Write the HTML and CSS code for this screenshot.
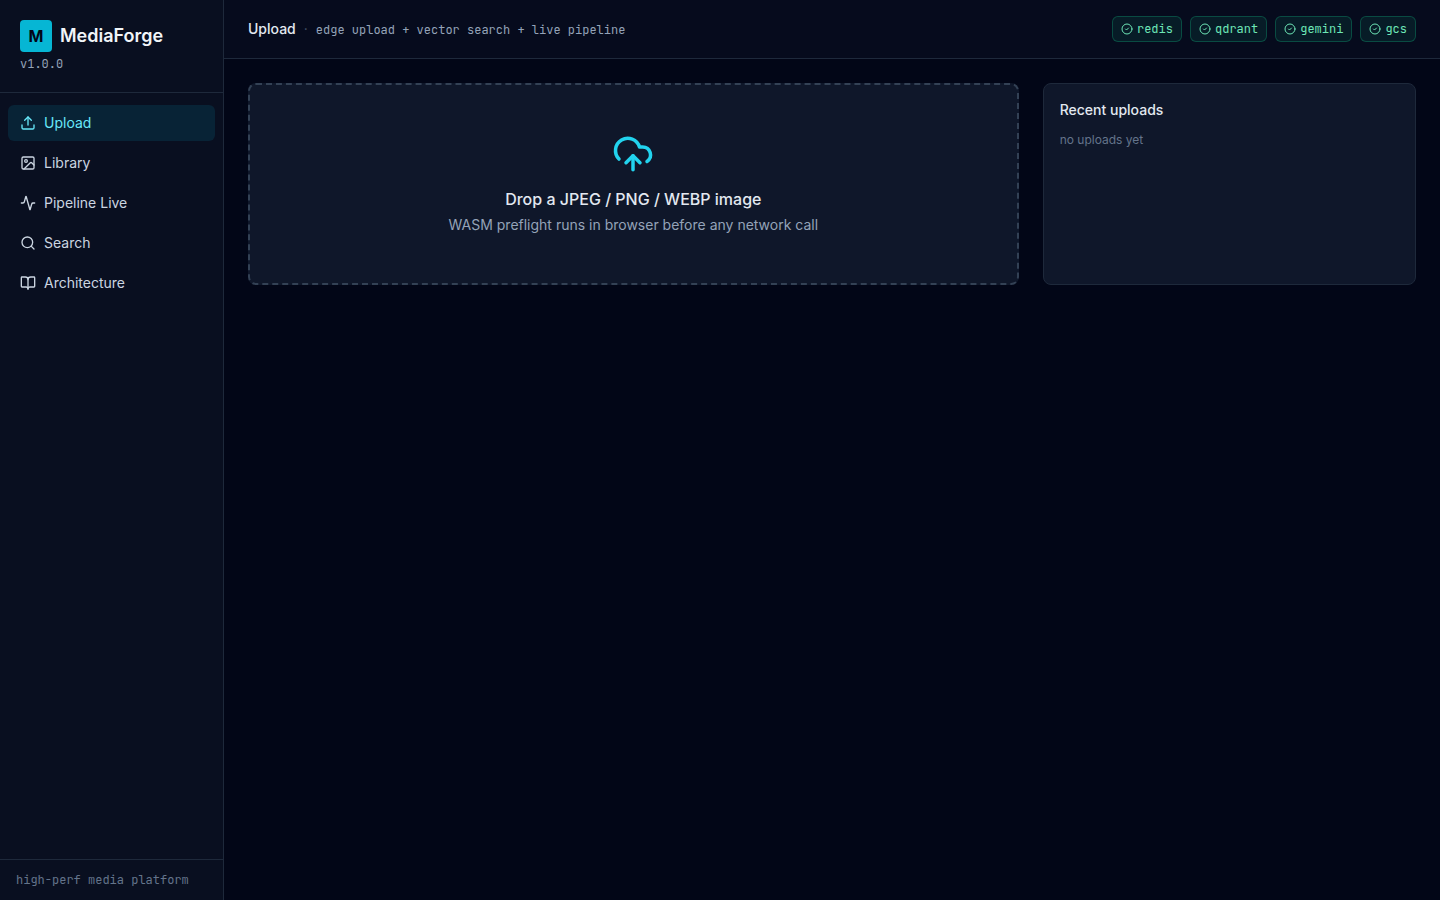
FILE: index.html
```
<!DOCTYPE html>
<html lang="en">
<head>
    <meta charset="UTF-8">
    <meta name="viewport" content="width=device-width, initial-scale=1.0">
    <title>MediaForge</title>
    <link rel="stylesheet" href="styles.css">
</head>
<body>
    <div class="app">
        <aside class="sidebar">
            <div class="brand">
                <div class="brand-row">
                    <span class="logo">M</span>
                    <span class="brand-name">MediaForge</span>
                </div>
                <div class="version">v1.0.0</div>
            </div>

            <nav class="nav">
                <a href="#upload" class="nav-link active" aria-current="page">
                    <svg class="icon" viewBox="0 0 24 24"><path d="M12 3v12"/><path d="m17 8-5-5-5 5"/><path d="M21 15v4a2 2 0 0 1-2 2H5a2 2 0 0 1-2-2v-4"/></svg>
                    Upload
                </a>
                <a href="#library" class="nav-link">
                    <svg class="icon" viewBox="0 0 24 24"><rect width="18" height="18" x="3" y="3" rx="2"/><circle cx="9" cy="9" r="2"/><path d="m21 15-3.086-3.086a2 2 0 0 0-2.828 0L6 21"/></svg>
                    Library
                </a>
                <a href="#pipeline" class="nav-link">
                    <svg class="icon" viewBox="0 0 24 24"><path d="M22 12h-2.48a2 2 0 0 0-1.93 1.46l-2.35 8.36a.25.25 0 0 1-.48 0L9.24 2.18a.25.25 0 0 0-.48 0l-2.35 8.36A2 2 0 0 1 4.49 12H2"/></svg>
                    Pipeline Live
                </a>
                <a href="#search" class="nav-link">
                    <svg class="icon" viewBox="0 0 24 24"><circle cx="11" cy="11" r="8"/><path d="m21 21-4.3-4.3"/></svg>
                    Search
                </a>
                <a href="#architecture" class="nav-link">
                    <svg class="icon" viewBox="0 0 24 24"><path d="M12 7v14"/><path d="M3 18a1 1 0 0 1-1-1V4a1 1 0 0 1 1-1h5a4 4 0 0 1 4 4 4 4 0 0 1 4-4h5a1 1 0 0 1 1 1v13a1 1 0 0 1-1 1h-6a3 3 0 0 0-3 3 3 3 0 0 0-3-3z"/></svg>
                    Architecture
                </a>
            </nav>

            <div class="sidebar-footer">high-perf media platform</div>
        </aside>

        <div class="content">
            <header class="topbar">
                <div class="crumbs">
                    <h1 class="page-title">Upload</h1>
                    <span class="dot">·</span>
                    <span class="tagline">edge upload + vector search + live pipeline</span>
                </div>
                <div class="services">
                    <span class="service"><svg class="icon" viewBox="0 0 24 24"><circle cx="12" cy="12" r="10"/><path d="m9 12 2 2 4-4"/></svg>redis</span>
                    <span class="service"><svg class="icon" viewBox="0 0 24 24"><circle cx="12" cy="12" r="10"/><path d="m9 12 2 2 4-4"/></svg>qdrant</span>
                    <span class="service"><svg class="icon" viewBox="0 0 24 24"><circle cx="12" cy="12" r="10"/><path d="m9 12 2 2 4-4"/></svg>gemini</span>
                    <span class="service"><svg class="icon" viewBox="0 0 24 24"><circle cx="12" cy="12" r="10"/><path d="m9 12 2 2 4-4"/></svg>gcs</span>
                </div>
            </header>

            <main class="main">
                <label class="dropzone" for="file">
                    <input class="file-input" id="file" type="file" accept="image/jpeg,image/png,image/webp">
                    <svg class="icon drop-icon" viewBox="0 0 24 24"><path d="M12 13v8"/><path d="M4 14.899A7 7 0 1 1 15.71 8h1.79a4.5 4.5 0 0 1 2.5 8.242"/><path d="m8 17 4-4 4 4"/></svg>
                    <span class="drop-title">Drop a JPEG / PNG / WEBP image</span>
                    <span class="drop-hint">WASM preflight runs in browser before any network call</span>
                </label>

                <section class="recent">
                    <h2 class="recent-title">Recent uploads</h2>
                    <p class="recent-empty">no uploads yet</p>
                </section>
            </main>
        </div>
    </div>
</body>
</html>
```
FILE: styles.css
```
* {
    margin: 0;
    padding: 0;
    box-sizing: border-box;
}

body {
    font-family: Inter, sans-serif;
    font-size: 14px;
    line-height: 20px;
    background: #020617;
    color: #e2e8f0;
    -webkit-font-smoothing: antialiased;
}

.app {
    display: flex;
    min-height: 100vh;
}

.icon {
    width: 16px;
    height: 16px;
    flex-shrink: 0;
    fill: none;
    stroke: currentColor;
    stroke-width: 2;
    stroke-linecap: round;
    stroke-linejoin: round;
}

/* Sidebar */
.sidebar {
    width: 224px;
    flex-shrink: 0;
    display: flex;
    flex-direction: column;
    background: rgba(15, 23, 42, 0.5);
    border-right: 1px solid #1e293b;
}

.brand {
    padding: 20px;
    border-bottom: 1px solid #1e293b;
}

.brand-row {
    display: flex;
    align-items: center;
    gap: 8px;
}

.logo {
    display: flex;
    align-items: center;
    justify-content: center;
    width: 32px;
    height: 32px;
    border-radius: 4px;
    background: #06b6d4;
    color: #020617;
    font-size: 16px;
    font-weight: 700;
}

.brand-name {
    font-size: 18px;
    line-height: 28px;
    font-weight: 600;
    color: #f1f5f9;
}

.version,
.sidebar-footer,
.tagline,
.service {
    font-family: "JetBrains Mono", "Liberation Mono", monospace;
    font-size: 12px;
    line-height: 16px;
}

.version {
    margin-top: 4px;
    color: #94a3b8;
}

.nav {
    flex: 1;
    display: flex;
    flex-direction: column;
    gap: 4px;
    padding: 12px 8px;
}

.nav-link {
    display: flex;
    align-items: center;
    gap: 8px;
    padding: 8px 12px;
    border-radius: 6px;
    color: #cbd5e1;
    text-decoration: none;
}

.nav-link:hover {
    background: #1e293b;
}

.nav-link.active {
    background: rgba(6, 182, 212, 0.12);
    color: #67e8f9;
}

.sidebar-footer {
    padding: 12px 16px;
    border-top: 1px solid #1e293b;
    color: #64748b;
}

/* Top bar */
.content {
    flex: 1;
    min-width: 0;
}

.topbar {
    display: flex;
    align-items: center;
    justify-content: space-between;
    padding: 16px 24px;
    background: rgba(15, 23, 42, 0.3);
    border-bottom: 1px solid #1e293b;
}

.crumbs {
    display: flex;
    align-items: baseline;
    gap: 8px;
}

.services {
    display: flex;
    align-items: center;
    gap: 8px;
}

.page-title,
.recent-title {
    font-size: 14px;
    font-weight: 500;
}

.dot {
    color: #475569;
}

.tagline {
    color: #94a3b8;
}

.service {
    display: flex;
    align-items: center;
    gap: 4px;
    padding: 4px 8px;
    border: 1px solid rgba(16, 185, 129, 0.3);
    border-radius: 6px;
    background: rgba(16, 185, 129, 0.1);
    color: #6ee7b7;
}

.service .icon {
    width: 12px;
    height: 12px;
}

/* Upload page */
.main {
    display: grid;
    grid-template-columns: repeat(3, 1fr);
    gap: 24px;
    padding: 24px;
}

.dropzone {
    grid-column: span 2;
    display: flex;
    flex-direction: column;
    align-items: center;
    padding: 48px;
    border: 2px dashed #334155;
    border-radius: 8px;
    background: #0f172a;
    cursor: pointer;
}

.file-input {
    position: absolute;
    width: 1px;
    height: 1px;
    opacity: 0;
}

.drop-icon {
    width: 42px;
    height: 42px;
    margin-bottom: 12px;
    color: #22d3ee;
}

.drop-title {
    font-size: 16px;
    line-height: 24px;
    font-weight: 500;
    margin-bottom: 4px;
}

.drop-hint {
    color: #94a3b8;
}

.recent {
    padding: 16px;
    border: 1px solid #1e293b;
    border-radius: 8px;
    background: #0f172a;
}

.recent-title {
    margin-bottom: 12px;
}

.recent-empty {
    font-size: 12px;
    line-height: 16px;
    color: #64748b;
}
```
